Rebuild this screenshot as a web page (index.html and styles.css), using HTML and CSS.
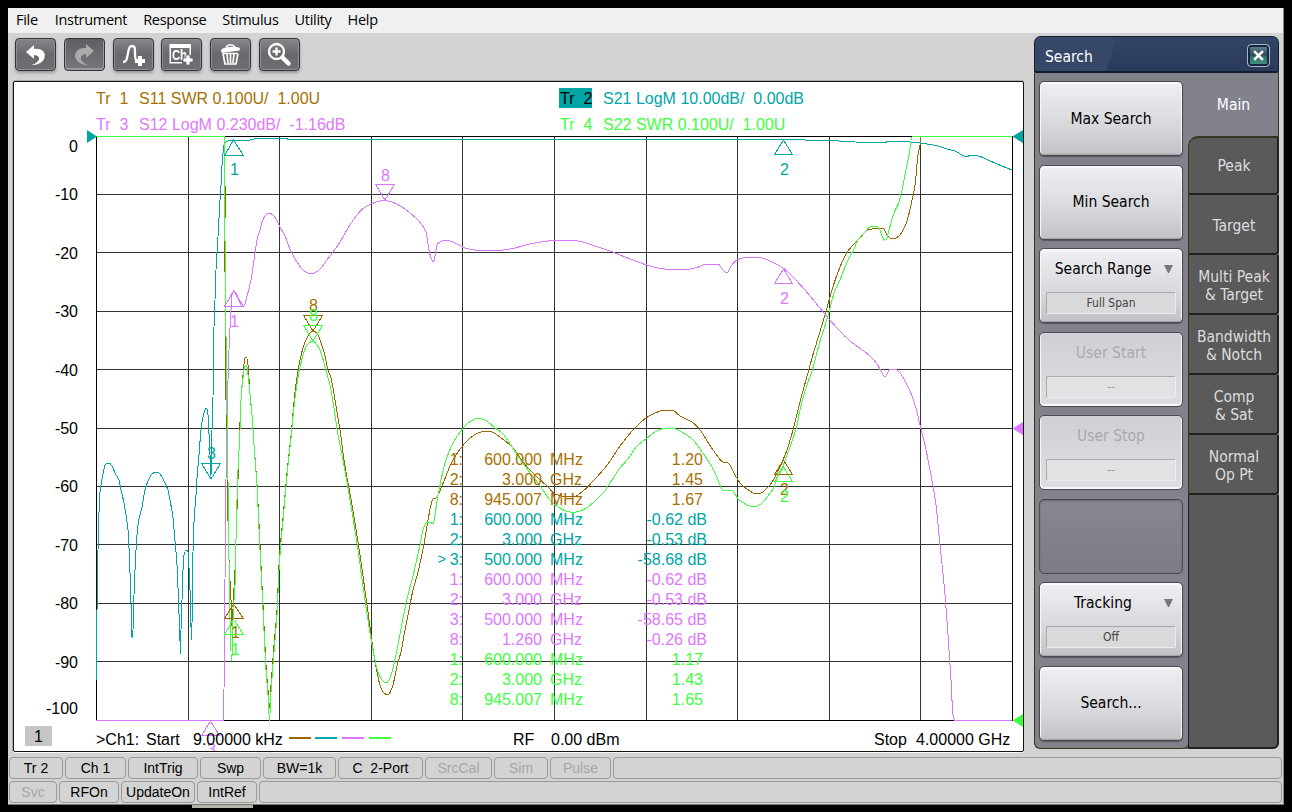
FILE: index.html
```html
<!DOCTYPE html>
<html lang="en">

<head>
    <meta charset="UTF-8">
    <meta name="viewport" content="width=device-width, initial-scale=1.0">
    <title>Network Analyzer</title>
    <link rel="stylesheet" href="styles.css">
</head>

<body>
    <div class="window">
        <nav class="menubar">
            <span>File</span>
            <span>Instrument</span>
            <span>Response</span>
            <span>Stimulus</span>
            <span>Utility</span>
            <span>Help</span>
        </nav>

        <div class="workspace">
            <div class="main">
                <div class="toolbar">
                    <button class="tool">
                        <svg viewBox="0 0 41 33"><path class="fill" d="M11 14 L19 7 V11 C27 10 32 15 29 21 C27 25 22 27 17 27 C25 24 27 18 19 17 V21 Z" /></svg>
                    </button>
                    <button class="tool tool-off">
                        <svg viewBox="0 0 41 33"><path class="fill" d="M30 13 L22 6 V10 C14 9 9 15 12 21 C14 25 19 27 24 27 C16 24 14 17 22 16 V20 Z" /></svg>
                    </button>
                    <button class="tool">
                        <svg viewBox="0 0 41 33">
                            <path class="line" d="M10 24 C14 24 14 20 15 15 C16 9 17 8 19 8 C22 8 22 10 22 15 C22 19 22 22 24 24" />
                            <path class="fill" d="M25 18 h4 v3 h3 v4 h-3 v3 h-4 v-3 h-3 v-4 h3 Z" />
                        </svg>
                    </button>
                    <button class="tool">
                        <svg viewBox="0 0 41 33">
                            <path class="fill" d="M8.500 6 H30 V17 H28.500 V10 H10 V24 H21 V25.500 H8.500 Z" />
                            <text class="ch" x="11" y="22" textLength="15" lengthAdjust="spacingAndGlyphs">Ch</text>
                            <path class="fill plus" d="M25 17 h4 v3 h3 v4 h-3 v3 h-4 v-3 h-3 v-4 h3 Z" />
                        </svg>
                    </button>
                    <button class="tool">
                        <svg viewBox="0 0 41 33">
                            <path class="line thin" d="M16 9 C18 6 23 6 25 9" />
                            <path class="fill" d="M11 12 C14 8 26 8 30 10 L29.500 12.500 L11.500 15 Z" />
                            <path class="line thin" d="M13 15.500 L15 26 H26 L28 15.500 M17 16 L18 25 M20.500 16 V25 M24 16 L23 25 M13 15.500 H28" />
                        </svg>
                    </button>
                    <button class="tool">
                        <svg viewBox="0 0 41 33">
                            <circle class="line" cx="17.500" cy="13.500" r="7.500" />
                            <path class="line" d="M17.500 9.500 V17.500 M13.500 13.500 H21.500" />
                            <path class="line thick" d="M23.500 19.500 L29.500 25.500" />
                        </svg>
                    </button>
                </div>

                <div class="plot">
                    <svg class="chart" viewBox="14 82 1009 669">
                        <!-- trace headers -->
                        <rect class="fill-teal" x="559" y="88" width="33" height="20" />
                        <g class="brown"><text x="96" y="104">Tr  1</text><text x="139" y="104">S11 SWR 0.100U/  1.00U</text></g>
                        <g class="teal"><text class="ink" x="560" y="104">Tr  2</text><text x="603" y="104">S21 LogM 10.00dB/  0.00dB</text></g>
                        <g class="pink"><text x="96" y="130">Tr  3</text><text x="139" y="130">S12 LogM 0.230dB/  -1.16dB</text></g>
                        <g class="green"><text x="560" y="130">Tr  4</text><text x="603" y="130">S22 SWR 0.100U/  1.00U</text></g>

                        <!-- grid -->
                        <path class="grid" d="M188.500 136V720 M279.500 136V720 M371.500 136V720 M462.500 136V720 M554.500 136V720 M646.500 136V720 M737.500 136V720 M829.500 136V720 M920.500 136V720
                            M96 194.500H1012 M96 252.500H1012 M96 311.500H1012 M96 369.500H1012 M96 428.500H1012 M96 486.500H1012 M96 544.500H1012 M96 603.500H1012 M96 661.500H1012" />
                        <path class="frame" d="M96.500 136.500H1012.500V720.500H96.500Z" />

                        <!-- y axis -->
                        <g class="axis">
                            <text x="78" y="152">0</text>
                            <text x="78" y="200">-10</text>
                            <text x="78" y="259">-20</text>
                            <text x="78" y="317">-30</text>
                            <text x="78" y="376">-40</text>
                            <text x="78" y="434">-50</text>
                            <text x="78" y="492">-60</text>
                            <text x="78" y="551">-70</text>
                            <text x="78" y="609">-80</text>
                            <text x="78" y="668">-90</text>
                            <text x="78" y="714">-100</text>
                        </g>

                        <!-- S11 -->
                        <path class="trace brown" data-points="225.500,186 224.500,253 225.500,290 226,400 227.500,500 229,560 231,600 232,628 233.500,597 235,570 236,540 239,450 241,400 243,375 245,358 246.500,357 248,365 250,394 252,415 254,445 257,485 260,545 263,605 266,665 268,690 269.500,707 271,685 274,645 277,610 279,565 281,538 283,518 285,495 288,463 291,436 292,425 295,392 300,360 304,345 308,336 313,331 317,333 320,340 324,352 328,370 331,378 335,400 340,430 344,460 352,505 360,555 367,605 374,655 380,685 384,693 388,695 392,688 398,662 401,652 405,630 409,610 413,590 418,572 424,544 428,520 431,505 433,499 436,498 442,486 450,466 456,455 461,448 468,440 476,434 485,431 492,432 500,437 514,449 522,461 536,476 548,487 555,494 565,496.500 573,497 583,491 595,479 608,464 620,446 634,429 646,418 655,413 665,410 672,410 680,416 692,422 700,430 709,444 716,454 723,462 728,463 735,475 741,484 750,491 756,494 761,493 770,485 776,475 783,460 787,450 793,430 798,410 804,387 806,380 812,358 819,335 825,315 832,290 838,272 846,254 852,246 860,238 866,231 872,229 883,228 886,233 890,238 893,239 899,236 906,224 911,205 915,185 918,155 920,145 921,136" />
                        <!-- S21 -->
                        <path class="trace teal" data-points="96.500,680 97,610 98,550 98.500,530 99.500,498 101,485 103,474 105,465 107,463 109,463 112,466 115,473 119,480 120.500,488 124,503 126,515 128,530 129.500,558 131,603 132,639 133,630 134,595 135,570 136,550 138,525 142,507 145,490 148,481 152,474 156,472 159,473 163,479 168,490 170,500 173,518 175,541 177,565 178.500,600 180.500,654 181,630 182,600 183,570 184,555 186,550 188,552 189,568 190,590 191.500,639 192.500,600 193,552 194,522 196,495 197,478 199,455 201,430 203,417 205,410 206.500,408 208,415 209,434 210,455 211,478 212,430 213,398 213.500,340 215,300 216,270 218,237 220,200 221,185 222,165 224,145 226,142 230,140.500 247,140.500 258,138.500 285,138.500 290,139.500 804,139.500 806,140.500 838,140.500 840,141.500 885,142.500 888,141.500 902,141.500 920,143 938,146 947,149 955,151 962,155 966,157 970,155.500 978,156 990,161 1002,166 1012,170" />
                        <!-- S12 -->
                        <path class="trace pink" data-points="96,720.500 223.500,720.500 224,690 225,580 226,480 227,430 228,380 229,350 231,310 232,295 234,291 237,295 240,303 242,306 244,306 246,300 251,280 254,260 257,240 260,230 262,222 265,216 269,213 273,215 276,219 280,227 285,236 290,249 297,262 303,270 308,273 314,273 319,270 327,260 333,252 340,242 348,228 357,215 365,207 371,204 380,201 385,200.500 392,202 402,207 410,213 418,220 426,232 429,250 431,258 433.500,262 435,256 437,245 440,242 446,240 455,243 465,248 475,250 492,251 510,249 530,244 548,241 560,240 578,241 592,245 610,251 630,259 650,266 665,269 690,269 700,266.500 706,264 718,264 723,270 727,273 731,266 737,260 745,257.500 753,257 762,258 772,262 783,268 795,279 810,296 824,313 838,329 850,341 870,356 877,364 882,373 885,377 890,369 895,369 900,373 910,391 916,408 920,425 925,445 930,470 936,505 940,545 945,595 948,635 951,680 953,715 955,720.500 1012,720.500" />
                        <!-- S22 -->
                        <path class="trace green" data-points="96,136.500 224.500,136.500 224.500,190 225.500,290 226.500,380 228,480 229,560 230,620 231.500,660 232.500,650 233,620 234,600 235,585 236,540 237,500 238,470 240,430 241,400 243,378 245,366 246.500,365 248,375 250,394 252,415 254,445 257,487 260,550 263,610 266,670 268,695 269.500,720 271,692 274,652 277,615 279,570 281,542 283,521 285,497 288,465 291,438 292,427 295,398 300,367 304,352 308,344 313,341 317,345 320,350 324,363 328,378 330,385 334,408 338,435 343,460 350,500 358,550 365,600 372,645 378,672 383,681 386,683 390,678 396,655 400,634 406,603 412,580 420,545 423,530 427,522 430,522 433,524 435,515 438,495 441,480 446,460 453,443 460,432 467,424 473,420 478,418 485,420 495,428 502,433 508,441 514,450 520,459 528,470 534,478 543,490 550,500 558,507 566,511 573,512.500 580,511 588,507 596,500 604,492 612,480 620,468 628,459 637,446 646,439 655,432 666,428 672,428 680,431 692,439 700,449 709,462 716,475 723,490 726,490 733,491 738,499 744,503 750,506 757,506 762,503 768,496 774,487 778,475 783,466 787,455 790,447 796,429 800,410 806,388 812,371 819,345 822,335 828,316 835,290 840,280 845,267 850,256 854,249 858,240 866,231 870,227 876,226 879,228 882,236 885.500,241 889,230 894,213 899,202 903,185 907,165 909,155 912,136.500 1012,136.500" />

                        <!-- markers -->
                        <g class="brown">
                            <path class="trace" d="M233.500 604L224.500 618.500H243.500Z" /><text x="231" y="638">1</text>
                            <path class="trace" d="M303.500 315.500H322.500L313 331Z" /><text x="309" y="311">8</text>
                            <path class="trace" d="M783.500 460L774.500 474.500H792.500Z" /><text x="780" y="495">2</text>
                        </g>
                        <g class="teal">
                            <path class="trace" d="M233.500 140L224.500 155.500H243.500Z" /><text x="230" y="175">1</text>
                            <path class="trace" d="M783.500 140L774.500 154.500H792.500Z" /><text x="780" y="175">2</text>
                            <path class="trace" d="M201.500 463.500H220.500L211 479Z" /><text x="207" y="459">3</text>
                        </g>
                        <g class="pink">
                            <path class="trace" d="M233.500 291L224.500 306.500H243.500Z" /><text x="230" y="327">1</text>
                            <path class="trace" d="M783.500 269L774.500 283.500H792.500Z" /><text x="780" y="304">2</text>
                            <path class="trace" d="M210.500 721L201.500 735.500H219.500Z" /><text x="207" y="755">3</text>
                            <path class="trace" d="M375.500 184.500H394.500L385 200Z" /><text x="381" y="181">8</text>
                        </g>
                        <g class="green">
                            <path class="trace" d="M233.500 619L224.500 634.500H243.500Z" /><text x="231" y="655">1</text>
                            <path class="trace" d="M303.500 325.500H322.500L313 341Z" /><text x="309" y="321">8</text>
                            <path class="trace" d="M783.500 467L774.500 481.500H792.500Z" /><text x="780" y="502">2</text>
                        </g>

                        <!-- marker readout -->
                        <g class="brown readout">
                            <text x="463" y="465">1:</text><text x="542" y="465">600.000</text><text class="unit" x="550" y="465">MHz</text><text x="703" y="465">1.20</text>
                            <text x="463" y="485">2:</text><text x="542" y="485">3.000</text><text class="unit" x="550" y="485">GHz</text><text x="703" y="485">1.45</text>
                            <text x="463" y="505">8:</text><text x="542" y="505">945.007</text><text class="unit" x="550" y="505">MHz</text><text x="703" y="505">1.67</text>
                        </g>
                        <g class="teal readout">
                            <text x="463" y="525">1:</text><text x="542" y="525">600.000</text><text class="unit" x="550" y="525">MHz</text><text x="707" y="525">-0.62 dB</text>
                            <text x="463" y="545">2:</text><text x="542" y="545">3.000</text><text class="unit" x="550" y="545">GHz</text><text x="707" y="545">-0.53 dB</text>
                            <text class="active" x="446" y="564">&gt;</text>
                            <text x="463" y="565">3:</text><text x="542" y="565">500.000</text><text class="unit" x="550" y="565">MHz</text><text x="707" y="565">-58.68 dB</text>
                        </g>
                        <g class="pink readout">
                            <text x="463" y="585">1:</text><text x="542" y="585">600.000</text><text class="unit" x="550" y="585">MHz</text><text x="707" y="585">-0.62 dB</text>
                            <text x="463" y="605">2:</text><text x="542" y="605">3.000</text><text class="unit" x="550" y="605">GHz</text><text x="707" y="605">-0.53 dB</text>
                            <text x="463" y="625">3:</text><text x="542" y="625">500.000</text><text class="unit" x="550" y="625">MHz</text><text x="707" y="625">-58.65 dB</text>
                            <text x="463" y="645">8:</text><text x="542" y="645">1.260</text><text class="unit" x="550" y="645">GHz</text><text x="707" y="645">-0.26 dB</text>
                        </g>
                        <g class="green readout">
                            <text x="463" y="665">1:</text><text x="542" y="665">600.000</text><text class="unit" x="550" y="665">MHz</text><text x="703" y="665">1.17</text>
                            <text x="463" y="685">2:</text><text x="542" y="685">3.000</text><text class="unit" x="550" y="685">GHz</text><text x="703" y="685">1.43</text>
                            <text x="463" y="705">8:</text><text x="542" y="705">945.007</text><text class="unit" x="550" y="705">MHz</text><text x="703" y="705">1.65</text>
                        </g>

                        <!-- reference level arrows -->
                        <path class="fill-teal" d="M87 130L97 136.500L87 143Z M1023 130L1012.500 136.500L1023 143Z" />
                        <path class="fill-pink" d="M1023 422L1012.500 428.500L1023 435Z" />
                        <path class="fill-green" d="M1023 714L1012.500 720.500L1023 727Z" />

                        <!-- channel footer -->
                        <rect class="badge" x="25" y="726" width="27" height="20" />
                        <g class="foot">
                            <text x="34" y="742">1</text>
                            <text x="96" y="745">&gt;Ch1:</text><text x="146" y="745">Start</text><text x="193" y="745">9.00000 kHz</text>
                            <text x="513" y="745">RF</text><text x="551" y="745">0.00 dBm</text>
                            <text x="874" y="745">Stop</text><text x="916" y="745">4.00000 GHz</text>
                        </g>
                        <path class="key brown" d="M289 738H311" />
                        <path class="key teal" d="M315 738H337" />
                        <path class="key pink" d="M342 738H364" />
                        <path class="key green" d="M369 738H391" />
                    </svg>
                </div>
            </div>

            <aside class="panel">
                <header class="panel-head">
                    <span>Search</span>
                    <button class="close"><svg viewBox="0 0 10 10"><path d="M1 1 L9 9 M9 1 L1 9" /></svg></button>
                </header>
                <div class="panel-body">
                    <div class="softkeys">
                        <button class="key-btn">Max Search</button>
                        <button class="key-btn">Min Search</button>
                        <button class="key-btn has-value"><span class="name has-arrow">Search Range<i class="arrow"></i></span><span class="value">Full Span</span></button>
                        <button class="key-btn has-value disabled"><span class="name">User Start</span><span class="value">--</span></button>
                        <button class="key-btn has-value disabled"><span class="name">User Stop</span><span class="value">--</span></button>
                        <div class="key-btn blank"></div>
                        <button class="key-btn has-value"><span class="name has-arrow">Tracking<i class="arrow"></i></span><span class="value">Off</span></button>
                        <button class="key-btn">Search...</button>
                    </div>
                    <div class="tabs">
                        <div class="tab current">Main</div>
                        <div class="tab first">Peak</div>
                        <div class="tab">Target</div>
                        <div class="tab">Multi Peak<br>&amp; Target</div>
                        <div class="tab">Bandwidth<br>&amp; Notch</div>
                        <div class="tab">Comp<br>&amp; Sat</div>
                        <div class="tab">Normal<br>Op Pt</div>
                        <div class="tab-rest"></div>
                    </div>
                </div>
            </aside>
        </div>

        <footer class="status">
            <div class="status-row row-one">
                <span>Tr 2</span>
                <span>Ch 1</span>
                <span>IntTrig</span>
                <span>Swp</span>
                <span>BW=1k</span>
                <span>C  2-Port</span>
                <span class="off">SrcCal</span>
                <span class="off">Sim</span>
                <span class="off">Pulse</span>
                <span></span>
            </div>
            <div class="status-row row-two">
                <span class="off">Svc</span>
                <span>RFOn</span>
                <span>UpdateOn</span>
                <span>IntRef</span>
                <span></span>
            </div>
        </footer>
    </div>
    <div class="handle"></div>

    <script src="traces.js"></script>
</body>

</html>
```
FILE: styles.css
```css
* {
    box-sizing: border-box;
}

body {
    margin: 0;
    padding: 8px;
    height: 812px;
    background: #000;
    overflow: hidden;
    font-family: "Liberation Sans", Arial, sans-serif;
}

button {
    padding: 0;
    font: inherit;
}

.window {
    display: flex;
    flex-direction: column;
    width: 1276px;
    height: 797px;
    background: #d3d3d3;
    border-bottom: 1px solid #777;
    border-right: 1px solid #888;
}

.handle {
    width: 61px;
    height: 3px;
    margin-left: 184px;
    background: #b4b4ac;
}

/* menu */
.menubar {
    display: flex;
    gap: 16px;
    height: 25px;
    padding-left: 8px;
    background: #f0f0f0;
    font: 14.500px/24px "Open Sans", "Noto Sans", sans-serif;
    letter-spacing: -0.300px;
    color: #000;
}

.menubar span:first-child {
    margin-right: 1px;
}

.workspace {
    display: flex;
    gap: 10px;
    height: 720px;
    padding-left: 5px;
}

.main {
    width: 1011px;
}

/* toolbar */
.toolbar {
    display: flex;
    gap: 7.800px;
    height: 48px;
    padding: 5px 0 0 2px;
}

.tool {
    width: 41px;
    height: 33px;
    border: 1px solid #333338;
    border-radius: 4px;
    background: linear-gradient(#85858a, #68686d 50%, #6e6e73);
    box-shadow: inset 0 0 0 1px #8e8e93, 0 2px 3px #999;
}

.tool svg {
    display: block;
    width: 41px;
    height: 33px;
    margin: -1px;
}

.tool-off {
    background: linear-gradient(#5e5e64, #77777c);
    box-shadow: inset 0 -1px 0 1px #99999e;
}

.tool .fill {
    fill: #fff;
}

.tool-off .fill {
    fill: #aaa;
}

.tool .line {
    fill: none;
    stroke: #fff;
    stroke-width: 2.300;
}

.tool .thin {
    stroke-width: 1.700;
}

.tool .thick {
    stroke-width: 4.500;
    stroke-linecap: round;
}

.tool .plus {
    stroke: #6b6b70;
    stroke-width: 0.800;
}

.tool .ch {
    font: bold 14px "Liberation Sans", Arial, sans-serif;
    fill: #fff;
}

/* chart */
.plot {
    height: 671px;
    background: #fff;
    border: 1px solid #14140a;
    border-radius: 2px;
    box-shadow: 0 1px 0 #f4f4f4, 0 -1px 0 #aaa, -1px 0 0 #aaa;
}

.chart {
    display: block;
    width: 1009px;
    height: 669px;
}

.chart text {
    font-size: 16px;
    white-space: pre;
    stroke: none;
}

.grid,
.frame {
    fill: none;
    stroke: #333;
    shape-rendering: crispEdges;
}

.frame {
    stroke: #000;
}

.brown {
    stroke: #996600;
    fill: #a87000;
}

.teal {
    stroke: #00a5a5;
    fill: #00a5a5;
}

.pink {
    stroke: #d976ff;
    fill: #dd78ff;
}

.green {
    stroke: #40ff40;
    fill: #40ff40;
}

.trace {
    fill: none;
    stroke-width: 1;
    shape-rendering: crispEdges;
}

.chart .ink {
    fill: #000;
}

.fill-teal {
    fill: #00a5a5;
}

.fill-pink {
    fill: #dd78ff;
}

.fill-green {
    fill: #40ff40;
}

.badge {
    fill: #c6c6c6;
}

.key {
    stroke-width: 2;
}

.axis,
.readout {
    text-anchor: end;
}

.readout .unit {
    text-anchor: start;
}

.chart .readout .active {
    font-size: 14px;
}

/* search panel */
.panel {
    width: 245px;
    height: 713px;
    margin-top: 3px;
    border-radius: 7px 7px 6px 6px;
    background: #5a5a5a;
    font-family: "DejaVu Sans Condensed", "DejaVu Sans", sans-serif;
    font-size: 15.500px;
    overflow: hidden;
}

.panel-head {
    display: flex;
    align-items: center;
    justify-content: space-between;
    height: 37px;
    padding: 2px 8px 0 10px;
    border: 1px solid #141c30;
    border-bottom-width: 2px;
    border-radius: 6px 6px 3px 3px;
    background: linear-gradient(108deg, #364768 32%, transparent 32.500%), linear-gradient(#334565, #2a3a5b);
    color: #fff;
}

.panel-head span {
    padding-top: 3px;
}

.close {
    width: 23px;
    height: 23px;
    border: 1px solid #a9b4c6;
    border-radius: 4px;
    background: linear-gradient(#6b8896, #2b4a5c 48%, #2c6868 52%, #4a9a88);
    box-shadow: inset 0 0 0 2px #162940;
}

.close svg {
    display: block;
    width: 11px;
    height: 11px;
    margin: 0 auto;
}

.close path {
    stroke: #fff;
    stroke-width: 2.200;
}

.panel-body {
    display: flex;
    height: 676px;
}

.softkeys {
    display: flex;
    flex-direction: column;
    gap: 8.500px;
    width: 154px;
    padding: 8px 4px 0 4px;
    background: #82828c;
    border: 1px solid #35351e;
    border-width: 0 0 1px 1px;
    border-radius: 0 0 6px 6px;
}

.key-btn {
    flex: none;
    width: 144px;
    height: 75px;
    border: 1px solid #4a4a50;
    border-radius: 5px;
    background: linear-gradient(#f0f0f4, #d8d8dc 60%, #c2c2c6);
    box-shadow: inset 0 1px 1px 1px #fafafc, inset 0 -1px 1px #999, 0 1px 1px #55555c;
    color: #000;
}

.has-value {
    display: flex;
    flex-direction: column;
    align-items: center;
    padding: 11px 6px 0 6px;
}

.name {
    display: grid;
    align-items: center;
    width: 130px;
    height: 18px;
    margin-bottom: 14px;
}

.has-arrow {
    grid-template-columns: 1fr 9px;
    column-gap: 4px;
    padding-right: 3px;
}

.arrow {
    border: 4.500px solid transparent;
    border-top: 8px solid #77777b;
    border-bottom: 0;
}

.value {
    width: 130px;
    height: 22px;
    border: 1px solid #b2b2b6;
    border-color: #aaaaae #ededf0 #ededf0 #aaaaae;
    border-radius: 2px;
    background: #d9d9dc;
    font-size: 12px;
    line-height: 20px;
    color: #44443c;
}

.disabled {
    background: linear-gradient(#d0d0d4, #dedee2);
    box-shadow: inset 0 -1px 1px 1px #f8f8fa;
    color: #a9a9ab;
}

.disabled .value {
    background: #e2e2e5;
    color: #999;
}

.blank {
    background: linear-gradient(#878791, #7c7c86);
    box-shadow: inset 0 1px 2px #66666e;
}

/* tabs */
.tabs {
    display: flex;
    flex-direction: column;
    width: 91px;
    background: #82828c;
}

.tab {
    display: flex;
    align-items: center;
    justify-content: center;
    height: 60px;
    padding: 3px 0 0 2px;
    border-right: 2px solid #202020;
    border-bottom: 2px solid #202020;
    border-left: 1px solid #35351e;
    border-radius: 0 0 4px 0;
    background: #5a5a5a;
    color: #ddd;
    text-align: center;
    line-height: 18px;
}

.current {
    height: 63px;
    padding: 1px 0 0 1px;
    border: 0;
    border-right: 1px solid #35351e;
    border-radius: 0;
    background: #82828c;
    color: #fff;
}

.first {
    height: 59px;
    padding-top: 0;
    border-top: 2px solid #35351e;
    border-radius: 10px 0 4px 0;
}

.tab-rest {
    flex: 1;
    border: 1px solid #202020;
    border-width: 0 2px 2px 1px;
    border-radius: 0 0 6px 0;
    background: #5a5a5a;
}

/* status bar */
.status {
    display: grid;
    gap: 2px;
    padding: 4px 1px 0 1px;
}

.status-row {
    display: grid;
    column-gap: 2px;
    height: 22px;
    font-size: 14px;
}

.row-one {
    grid-template-columns: 54px 61px 70px 61px 73px 85px 67px 54px 61px 1fr;
}

.row-two {
    grid-template-columns: 48px 60px 74px 60px 1fr;
}

.status-row span {
    border: 1px solid #999;
    border-radius: 4px;
    text-align: center;
    line-height: 20px;
    white-space: pre;
}

.status-row .off {
    color: #a6a6a6;
}
```
FILE: traces.js
```js
// Turn the sampled points of each trace into a smooth curve
// that never overshoots its samples.
function smoothPath(points) {
    const n = points.length;
    const slope = [];
    for (let i = 0; i < n - 1; i++) {
        const dx = points[i + 1][0] - points[i][0];
        slope.push(dx > 0.5 ? (points[i + 1][1] - points[i][1]) / dx : null);
    }

    const tangent = points.map((p, i) => {
        const a = slope[i - 1];
        const b = slope[i];
        if (a == null) return b == null ? 0 : b;
        if (b == null) return a;
        return a * b <= 0 ? 0 : 2 * a * b / (a + b);
    });

    let d = `M${points[0]}`;
    for (let i = 0; i < n - 1; i++) {
        const [x0, y0] = points[i];
        const [x1, y1] = points[i + 1];
        if (slope[i] === null) {
            d += `L${x1},${y1}`;
            continue;
        }
        const h = (x1 - x0) / 3;
        d += `C${x0 + h},${y0 + h * tangent[i]} ${x1 - h},${y1 - h * tangent[i + 1]} ${x1},${y1}`;
    }
    return d;
}

document.querySelectorAll('.trace[data-points]').forEach(path => {
    const points = path.dataset.points.split(' ').map(p => p.split(',').map(Number));
    path.setAttribute('d', smoothPath(points));
});
```
